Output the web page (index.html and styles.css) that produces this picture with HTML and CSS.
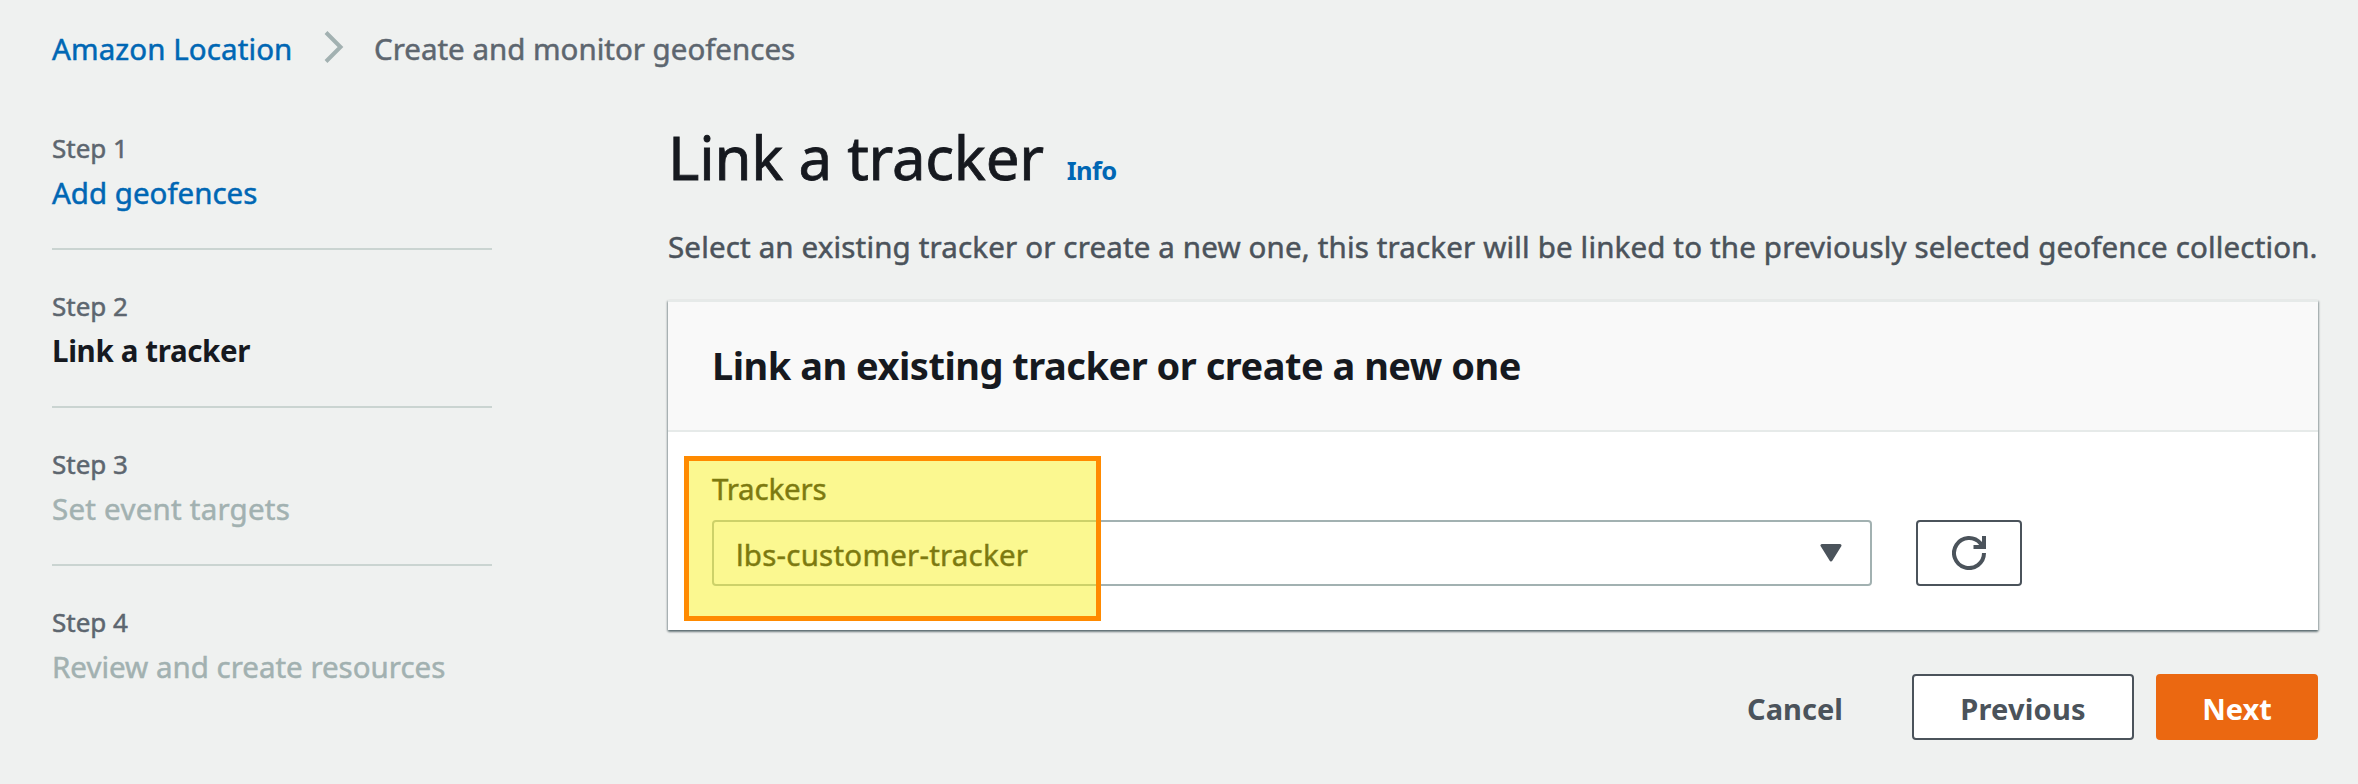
FILE: index.html
```
<!DOCTYPE html>
<html lang="en">
<head>
<meta charset="utf-8">
<title>Link a tracker</title>
<link rel="stylesheet" href="styles.css">
</head>
<body>
<nav class="breadcrumbs">
  <a class="link root" href="#">Amazon Location</a>
  <svg class="chevron" width="20" height="34" viewBox="0 0 20 34"><path d="M2 2.500 16.500 17 2 31.500" fill="none" stroke="#a2b1b1" stroke-width="4"/></svg>
  <span class="current">Create and monitor geofences</span>
</nav>
<div class="layout">
  <ol class="steps">
    <li class="step"><div class="step-no">Step 1</div><a class="step-name link" href="#">Add geofences</a></li>
    <li class="step"><div class="step-no">Step 2</div><div class="step-name active">Link a tracker</div></li>
    <li class="step"><div class="step-no">Step 3</div><div class="step-name disabled targets">Set event targets</div></li>
    <li class="step"><div class="step-no">Step 4</div><div class="step-name disabled">Review and create resources</div></li>
  </ol>
  <main class="main">
    <div class="title-row"><h1 class="title">Link a tracker</h1><a class="info" href="#">Info</a></div>
    <p class="desc">Select an existing tracker or create a new one, this tracker will be linked to the previously selected geofence collection.</p>
    <section class="panel">
      <div class="panel-head"><h2>Link an existing tracker or create a new one</h2></div>
      <div class="panel-body">
        <div class="label">Trackers</div>
        <div class="field">
          <div class="select"><span>lbs-customer-tracker</span><svg width="22" height="18" viewBox="0 0 22 18"><path d="M2 1.500h18L11 16z" fill="#4b535b" stroke="#4b535b" stroke-width="3" stroke-linejoin="round"/></svg></div>
          <button class="btn refresh" aria-label="Refresh"><svg width="34" height="34" viewBox="0 0 34 34" fill="none" stroke="#4b535b" stroke-width="4"><path d="M32 17A15 15 0 1 1 28.500 7.400L31 11"/><path d="M32 0V11H21.500"/></svg></button>
        </div>
        <div class="highlight"></div>
      </div>
    </section>
    <div class="actions">
      <button class="btn cancel">Cancel</button>
      <button class="btn previous">Previous</button>
      <button class="btn next">Next</button>
    </div>
  </main>
</div>
</body>
</html>
```
FILE: styles.css
```
* { box-sizing: border-box; }
body {
  margin: 0;
  min-height: 784px;
  padding: 29px 40px 0 52px;
  background: #eff1f0;
  color: #16191f;
  font-family: "Noto Sans", "Open Sans", sans-serif;
  font-size: 29.5px;
  line-height: 40px;
  -webkit-text-stroke: 0.5px currentColor;
}
a { text-decoration: none; }
.link { color: #0067b4; }
.breadcrumbs { display: flex; align-items: center; height: 40px; }
.root { width: 240px; letter-spacing: 0.1px; white-space: nowrap; }
.chevron { margin: -4px 30px 0 32px; }
.current { color: #5d666f; }
.layout { display: flex; justify-content: space-between; }
.steps { list-style: none; margin: 23px 0 0; padding: 36px 0 0; width: 440px; }
.step { display: flex; flex-direction: column; gap: 5px; padding-bottom: 35px; margin-bottom: 36px; border-bottom: 2px solid #cad4d1; }
.step:last-child { border: 0; }
.step-no { font-size: 26px; color: #5d666f; }
.active { font-weight: 700; letter-spacing: -0.36px; -webkit-text-stroke: 0; }
.disabled { color: #a2b1b1; }
.targets { letter-spacing: 0.24px; }
.main { width: 1650px; margin-top: 48px; }
.title-row { display: flex; align-items: baseline; gap: 23px; height: 80px; }
.title { margin: 0; font-size: 60px; font-weight: 400; line-height: 80px; letter-spacing: -0.25px; -webkit-text-stroke: 0.8px currentColor; }
.info { color: #0067b4; font-size: 25.5px; font-weight: 700; letter-spacing: -0.6px; -webkit-text-stroke: 0; }
.desc { margin: 30px 0 33px; color: #4b535b; white-space: nowrap; letter-spacing: 0.157px; }
.panel { border-top: 2px solid #e6eae9; background: #fff; box-shadow: 0 2px 2px 0 rgba(0,28,36,.4), 1px 1px 2px 0 rgba(0,28,36,.25), -1px 1px 2px 0 rgba(0,28,36,.25); }
.panel-head { height: 130px; padding: 38px 44px; border-bottom: 2px solid #e6eae9; background: #f9f9f9; }
h2 { margin: 0; font-size: 38px; line-height: 50px; letter-spacing: -0.5px; -webkit-text-stroke: 0; }
.panel-body { position: relative; padding: 37px 44px 44px; }
.label { color: #000; margin-bottom: 11px; letter-spacing: -0.2px; }
.field { display: flex; gap: 44px; }
.select { display: flex; align-items: center; justify-content: space-between; width: 1160px; height: 66px; padding: 3px 28px 0 22px; border: 2px solid #a2b1b1; border-radius: 4px; color: #000; letter-spacing: 0.22px; }
.select svg { margin-top: -3px; }
.btn { height: 66px; padding: 3px 0 0; border: 2px solid #4b535b; border-radius: 4px; background: #fff; color: #4b535b; font: inherit; font-size: 29px; font-weight: 700; -webkit-text-stroke: 0; }
.refresh { width: 106px; padding: 0; display: flex; align-items: center; justify-content: center; }
.highlight { position: absolute; left: 16px; top: 24px; width: 417px; height: 165px; border: 5px solid #ff8a00; background: rgba(248,241,33,.5); }
.actions { display: flex; justify-content: flex-end; gap: 22px; margin-top: 44px; }
.cancel { border-color: transparent; background: none; width: 190px; }
.previous { width: 222px; letter-spacing: 0.2px; }
.next { width: 162px; background: #eb6811; border-color: #eb6811; color: #fff; }
```
